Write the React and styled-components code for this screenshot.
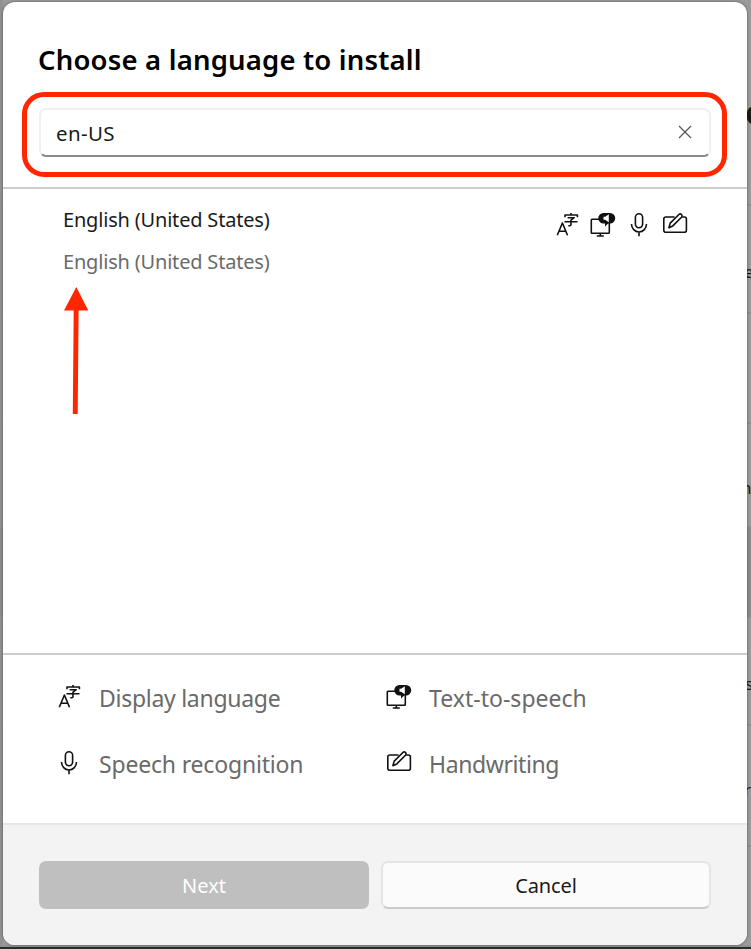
import styled, { createGlobalStyle } from "styled-components";

const App = () => {
  return (
    <>
      <GlobalStyle />
      <Desktop>
        <SettingsPage aria-hidden="true">
          <SettingsRow height={206} size={34} weight={700} offset={20}>
            o
          </SettingsRow>
          <SettingsRow height={108} offset={24} indent={744}>
            e
          </SettingsRow>
          <SettingsRow height={110} />
          <SettingsRow height={104} offset={24} indent={741}>
            n
          </SettingsRow>
          <SettingsRow height={90} shade />
          <SettingsRow height={108} offset={24}>
            s
          </SettingsRow>
          <SettingsRow height={121} offset={8} indent={744}>
            r
          </SettingsRow>
          <SettingsRow height={100} />
        </SettingsPage>
        <Dialog>
          <Header>
            <Title>Choose a language to install</Title>
            <SearchBox>
              <SearchInput defaultValue="en-US" aria-label="Language" />
              <ClearButton aria-label="Clear">
                <svg width="14" height="14" viewBox="0 0 14 14">
                  <path d="M1 1l12 12M13 1L1 13" stroke="#555" strokeWidth="1.2" />
                </svg>
              </ClearButton>
              <Highlight />
            </SearchBox>
          </Header>
          <Results>
            <Result>
              <div>
                <LanguageName>English (United States)</LanguageName>
                <LanguageName muted>English (United States)</LanguageName>
              </div>
              <Features>
                <LanguageIcon />
                <SpeechIcon />
                <MicIcon />
                <PenIcon />
              </Features>
            </Result>
            <Arrow width="26" height="130" viewBox="0 0 26 130">
              <path d="M13.3 1L25.3 24.5H15.6L14.7 128H9.8L10.7 24.5H1z" fill="#ff2600" />
            </Arrow>
          </Results>
          <Legend>
            <LegendItem>
              <IconSlot shift={1}>
                <LanguageIcon />
              </IconSlot>
              <LegendText spacing="-0.28px">Display language</LegendText>
            </LegendItem>
            <LegendItem>
              <IconSlot>
                <SpeechIcon />
              </IconSlot>
              <LegendText spacing="0.02px">Text-to-speech</LegendText>
            </LegendItem>
            <LegendItem>
              <IconSlot>
                <MicIcon />
              </IconSlot>
              <LegendText spacing="-0.18px">Speech recognition</LegendText>
            </LegendItem>
            <LegendItem>
              <IconSlot>
                <PenIcon />
              </IconSlot>
              <LegendText spacing="-0.4px">Handwriting</LegendText>
            </LegendItem>
          </Legend>
          <Footer>
            <NextButton disabled>Next</NextButton>
            <CancelButton>Cancel</CancelButton>
          </Footer>
        </Dialog>
      </Desktop>
    </>
  );
};

const LanguageIcon = () => (
  <Icon width="24" height="25" viewBox="0 0 24 25">
    <path d="M1.3 23.2L6.4 11l5.1 12.2M3.1 19.3h6.6" />
    <path d="M15 1v2M9 5.2V3h12.4v2.2M11.6 5.7h6.6L15 8.2v4.3q0 1.2-1.2 1.2h-1.5M8.5 9.8h13" />
  </Icon>
);

const SpeechIcon = () => (
  <Icon width="26" height="25" viewBox="0 0 26 25">
    <path d="M9 7.2H2q-.7 0-.7.7v12.6q0 .8.7.8h16.6q.7 0 .7-.8V11M10.3 21.3V24M6.8 24h7" />
    <path
      d="M13.5 1h6.5a5.2 5.2 0 0 1 0 10.5h-1.8L15 14.5v-3h-1.5A5.2 5.2 0 0 1 13.5 1z"
      fill="#111"
      stroke="none"
    />
    <path d="M13.5 4.8h1.7L18.8 2.2v8L15.2 7.7H13.5z" fill="#fff" stroke="none" />
  </Icon>
);

const MicIcon = () => (
  <Icon width="18" height="25" viewBox="0 0 18 25">
    <rect x="5.4" y="1.7" width="7.2" height="14" rx="3.6" />
    <path d="M1.5 12a7.5 8 0 0 0 15 0M9 20v4.3" />
  </Icon>
);

const PenIcon = () => (
  <Icon width="26" height="25" viewBox="0 0 26 25">
    <path d="M12.6 5H3.9Q1.8 5 1.8 7v11.2q0 2 2.1 2h18.5q2 0 2-2V7q0-2-2-2h-2.2" />
    <path d="M6.9 15.7l1.3-4.6 8.7-8.6q1.3-1.2 2.6 0 1.2 1.3 0 2.7l-8.7 8.7z" />
  </Icon>
);

const GlobalStyle = createGlobalStyle`
  * {
    box-sizing: border-box;
  }

  body {
    margin: 0;
    font-family: "Noto Sans", "Open Sans", sans-serif;
    color: #1a1a1a;
  }

  button, input {
    font: inherit;
    color: inherit;
  }
`;
const Desktop = styled.div`
  position: relative;
  display: flex;
  width: 751px;
  height: 949px;
  padding: 2px 4px 4px 3px;
  overflow: hidden;
  background: #9b9b9b;
  border-bottom: 2px solid #2b2b2b;
`;
const SettingsPage = styled.div`
  position: absolute;
  inset: 0;
  background: linear-gradient(to right, #929292 0 3px, #9b9b9b 3px);
`;
const SettingsRow = styled.div.withConfig({
  shouldForwardProp: (p) =>
    !["height", "size", "weight", "offset", "indent", "shade"].includes(p),
})`
  display: flex;
  align-items: center;
  height: ${(p) => p.height}px;
  padding-top: ${(p) => p.offset || 0}px;
  padding-left: ${(p) => p.indent || 745}px;
  border-bottom: 2px solid #909090;
  background: ${(p) => (p.shade ? "#8c8c8c" : "transparent")};
  font-size: ${(p) => p.size || 17}px;
  font-weight: ${(p) => p.weight || 400};
  line-height: 1;
`;
const Dialog = styled.div`
  position: relative;
  display: flex;
  flex-direction: column;
  width: 744px;
  height: 943px;
  overflow: hidden;
  background: #fff;
  border-radius: 12px;
  box-shadow: 0 0 3px rgba(0, 0, 0, 0.45);
`;
const Header = styled.div`
  height: 187px;
  padding: 38px 36px 0;
  border-bottom: 2px solid #ccc;
`;
const Title = styled.h1`
  margin: 0 0 28px -1px;
  color: #000;
  font-size: 27.5px;
  font-weight: 600;
  letter-spacing: 0.18px;
  line-height: 40px;
  white-space: nowrap;
`;
const SearchBox = styled.div`
  position: relative;
  display: flex;
  align-items: center;
  height: 49px;
  padding: 0 17px 0 15px;
  border: 2px solid #f0f0f0;
  border-bottom-color: #8a8a8a;
  border-radius: 7px;
`;
const SearchInput = styled.input`
  flex: 1;
  padding: 0;
  border: none;
  outline: none;
  background: transparent;
  font-size: 20.5px;
  letter-spacing: 0.35px;
`;
const ClearButton = styled.button`
  display: flex;
  padding: 0 0 2px;
  border: none;
  background: none;
`;
const Highlight = styled.div`
  position: absolute;
  inset: -18.5px -18px -21.5px -19px;
  border: 5px solid #ff2600;
  border-radius: 22px;
  pointer-events: none;
`;
const Results = styled.div`
  position: relative;
  height: 466px;
  padding: 10px 59px 0 60px;
  border-bottom: 2px solid #ccc;
`;
const Result = styled.div`
  display: flex;
  justify-content: space-between;
`;
const LanguageName = styled.div.withConfig({ shouldForwardProp: (p) => p !== "muted" })`
  height: 42px;
  color: ${(p) => (p.muted ? "#6a6a6a" : "#1a1a1a")};
  font-size: 20px;
  letter-spacing: -0.19px;
  line-height: 42px;
  white-space: nowrap;
`;
const Features = styled.div`
  display: grid;
  grid-template-columns: 34px 40px 32px 26px;
  padding-top: 13px;
`;
const Icon = styled.svg`
  display: block;
  flex-shrink: 0;
  fill: none;
  stroke: #111;
  stroke-width: 1.6;
  stroke-linejoin: round;
`;
const Arrow = styled.svg`
  position: absolute;
  left: 60px;
  top: 97px;
`;
const Legend = styled.div`
  display: grid;
  grid-template-columns: 330px 1fr;
  grid-auto-rows: 66px;
  height: 170px;
  padding: 10px 54px 0;
  border-bottom: 2px solid #e6e6e6;
`;
const LegendItem = styled.div`
  display: flex;
  align-items: center;
`;
const IconSlot = styled.div.withConfig({ shouldForwardProp: (p) => p !== "shift" })`
  display: flex;
  justify-content: center;
  width: 24px;
  margin-left: ${(p) => p.shift || 0}px;
  margin-right: ${(p) => 18 - (p.shift || 0)}px;
  padding-bottom: 4px;
`;
const LegendText = styled.span.withConfig({ shouldForwardProp: (p) => p !== "spacing" })`
  color: #6a6a6a;
  font-size: 23px;
  letter-spacing: ${(p) => p.spacing};
  white-space: nowrap;
`;
const Footer = styled.div`
  flex: 1;
  display: grid;
  grid-template-columns: 330px 330px;
  gap: 12px;
  padding: 36px;
  background: #f3f3f3;
`;
const Button = styled.button`
  height: 48px;
  padding: 0;
  border-radius: 7px;
  font-size: 20px;
`;
const NextButton = styled(Button)`
  border: none;
  background: #bfbfbf;
  color: #fff;
`;
const CancelButton = styled(Button)`
  border: 2px solid #e5e5e5;
  border-bottom-color: #ccc;
  background: #fbfbfb;
  letter-spacing: -0.15px;
`;

export default App;
